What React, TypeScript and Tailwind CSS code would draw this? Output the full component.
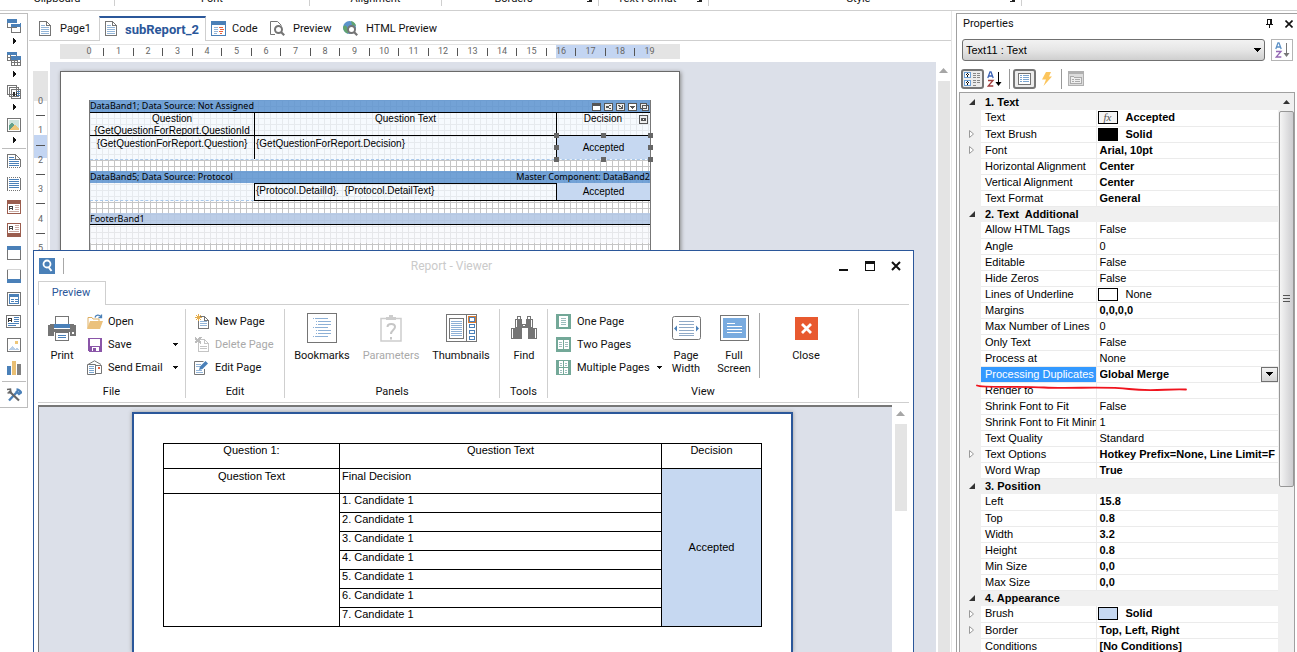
import type { ReactNode } from "react";

type IconProps = { w: number; h: number; children: ReactNode; smooth?: boolean };

function Icon({ w, h, children, smooth }: IconProps) {
  return (
    <svg
      width={w}
      height={h}
      viewBox={`0 0 ${w} ${h}`}
      fill="none"
      shapeRendering={smooth ? "auto" : "crispEdges"}
      className="shrink-0"
      aria-hidden="true"
    >
      {children}
    </svg>
  );
}

const BLUE = "#4a80b8";
const GRAY = "#757575";
const GREEN = "#73a898";

/* ---------- shared icons ---------- */

function PageIcon() {
  return (
    <Icon w={12} h={15}>
      <path d="M.5.5h7l4 4v10H.5z" fill="#fff" stroke={GRAY} />
      <path d="M7.5.5v4h4" stroke={GRAY} />
      <path d="M2 4.5h4M2 6.5h8M2 8.5h8M2 10.5h8M2 12.5h8" stroke="#93b5d8" />
    </Icon>
  );
}

function CodeIcon() {
  return (
    <Icon w={15} h={15}>
      <path d="M.5.5h14v14H.5z" fill="#fff" stroke={BLUE} />
      <path d="M0 0h15v4H0z" fill={BLUE} />
      <path d="M3 6.5h4M3 8.5h4M3 10.5h4M3 12.5h3" stroke="#93b5d8" />
      <path d="M8 6.5h4M9 8.5h4M8 10.5h4M9 12.5h2" stroke="#e8623c" />
    </Icon>
  );
}

function PreviewIcon() {
  return (
    <Icon w={15} h={15} smooth>
      <path d="M5 13.5H.5V.5h7l4 4" stroke={GRAY} />
      <circle cx="8.5" cy="8.5" r="3.5" fill="#fff" stroke={GRAY} strokeWidth="2" />
      <path d="M11 11l3.2 3.2" stroke={GRAY} strokeWidth="2.2" />
    </Icon>
  );
}

function HtmlIcon() {
  return (
    <Icon w={15} h={15} smooth>
      <circle cx="6.5" cy="6.5" r="6.5" fill="#5b93cc" />
      <path d="M0 6c2-3 4-1 4 1s2 2 1 5.500C2 12 0 9 0 6zM8 0c3 .5 5 3 5 5L9 4z" fill="#61a46f" />
      <circle cx="8.500" cy="8.500" r="3.500" fill="#fff" stroke={GRAY} strokeWidth="2" />
      <path d="M11 11l3.200 3.200" stroke={GRAY} strokeWidth="2.200" />
    </Icon>
  );
}

function ArrowRight() {
  return (
    <Icon w={4} h={6}>
      <path d="M0 0h1v6H0zM1 1h1v4H1zM2 2h1v2H2z" fill="#111" />
    </Icon>
  );
}

function ArrowDown() {
  return (
    <Icon w={5} h={3}>
      <path d="M0 0h5v1H0zM1 1h3v1H1zM2 2h1v1H2z" fill="#111" />
    </Icon>
  );
}

function ScrollUp() {
  return (
    <Icon w={9} h={5} smooth>
      <path d="M0 5l4.500-5L9 5z" fill="#a6a6a6" />
    </Icon>
  );
}

function Launcher() {
  return (
    <Icon w={7} h={6}>
      <path d="M0 0h1v2H0zM3 3l3 2M6 1v4H2" stroke="#222" />
    </Icon>
  );
}

/* ---------- top strip ---------- */

const ribbonGroups = [
  { label: "Clipboard", width: "w-[115px]", launcher: false },
  { label: "Font", width: "w-[195px]", launcher: false },
  { label: "Alignment", width: "w-[132px]", launcher: false },
  { label: "Borders", width: "w-[157px]", launcher: true },
  { label: "Text Format", width: "w-[110px]", launcher: true },
  { label: "Style", width: "w-[313px]", launcher: true },
];

function RibbonStrip() {
  return (
    <header className="flex h-[11px] shrink-0 overflow-hidden border-b border-[#cfcfcf]">
      {ribbonGroups.map((g) => (
        <div
          key={g.label}
          className={`-mt-[7px] flex h-[13px] shrink-0 items-start border-r border-[#cfcfcf] leading-3 ${g.width}`}
        >
          <span className="flex-1 text-center">{g.label}</span>
          {g.launcher && (
            <button aria-label={`${g.label} settings`} className="mt-[3px] mr-1.5">
              <Launcher />
            </button>
          )}
        </div>
      ))}
    </header>
  );
}

/* ---------- left toolbar ---------- */

const menuTools = [
  {
    name: "Bands",
    icon: (
      <Icon w={14} h={14}>
        <path d="M.5.5h9v8h-9zM4.500 5.500h9v8h-9z" fill="#fff" stroke={GRAY} />
        <path d="M0 0h10v4H0zM4 4h10v4H4z" fill={BLUE} />
        <path d="M4 4.500h9" stroke="#fff" />
      </Icon>
    ),
  },
  {
    name: "Cross bands",
    icon: (
      <Icon w={14} h={14}>
        <path d="M.5.5h9v8h-9zM4.500 5.500h9v8h-9z" fill="#fff" stroke={GRAY} />
        <path d="M0 0h10v3H0zM4 4h10v4H4z" fill={BLUE} />
        <path d="M0 5.500h4M3.500 3v5M4 10.500h10M7.500 8v6M10.500 8v6" stroke={GRAY} />
      </Icon>
    ),
  },
  {
    name: "Components",
    icon: (
      <Icon w={14} h={14}>
        <path d="M.5.5h9v9h-9zM2.500 2.500h9v9h-9zM4.500 4.500h9v9h-9z" fill="#fff" stroke={GRAY} />
        <path d="M6.500 11V7h1v4M9.500 7v4" stroke="#333" />
        <path d="M10 6.500h3M10 8.500h3M10 10.500h3" stroke={BLUE} />
      </Icon>
    ),
  },
  {
    name: "Pictures",
    icon: (
      <Icon w={14} h={14}>
        <path d="M.5.5h13v13H.5z" fill="#fff" stroke={GRAY} />
        <path d="M2 2h10v10H2z" fill="#cfe3dc" />
        <path d="M2 8l3-4 3 4v4H2z" fill="#61a089" />
        <path d="M2 12l6-5 4 4v1z" fill="#eec679" />
      </Icon>
    ),
  },
];

const tools = [
  {
    name: "Report title",
    icon: (
      <Icon w={14} h={14}>
        <path d="M.5 13V.5h8l5 5V13" fill="#fff" stroke={GRAY} />
        <path d="M8.500 0v5H14" stroke={GRAY} />
        <path d="M2 3.500h5M2 5.500h6M2 7.500h10M2 9.500h10M2 11.500h10" stroke={BLUE} />
        <path d="M0 13.500h14" stroke={GRAY} strokeDasharray="1 1" />
      </Icon>
    ),
  },
  {
    name: "Page header",
    icon: (
      <Icon w={14} h={14}>
        <path d="M.5 1v12M13.500 1v12" stroke={GRAY} />
        <path d="M0 .5h14M0 13.500h14" stroke={GRAY} strokeDasharray="1 1" />
        <path d="M2 2.500h10M2 4.500h10M2 6.500h10M2 8.500h10M2 10.500h10" stroke={BLUE} />
      </Icon>
    ),
  },
  {
    name: "Header",
    icon: (
      <Icon w={14} h={14}>
        <path d="M.5.5h13v13H.5z" fill="#fff" stroke="#9b5d4e" />
        <path d="M0 0h14v4H0z" fill="#9b5d4e" />
        <path d="M2.500 10V6h3v4M2 8.500h4" stroke="#444" />
        <path d="M8 5.500h4M8 7.500h4M8 9.500h4M2 11.500h10" stroke="#c9aaa2" />
      </Icon>
    ),
  },
  {
    name: "Footer",
    icon: (
      <Icon w={14} h={14}>
        <path d="M.5.5h13v13H.5z" fill="#fff" stroke="#9b5d4e" />
        <path d="M0 10h14v4H0z" fill="#9b5d4e" />
        <path d="M2.500 7V3h3v4M2 5.500h4" stroke="#444" />
        <path d="M8 2.500h4M8 4.500h4M8 6.500h4M2 8.500h10" stroke="#c9aaa2" />
      </Icon>
    ),
  },
  {
    name: "Group header",
    icon: (
      <Icon w={14} h={14}>
        <path d="M.5.5h13v13H.5z" fill="#fff" stroke={GRAY} />
        <path d="M0 0h14v4H0z" fill={BLUE} />
      </Icon>
    ),
  },
  {
    name: "Group footer",
    icon: (
      <Icon w={14} h={14}>
        <path d="M.5 1v12M13.500 1v12" stroke={GRAY} />
        <path d="M0 .5h14" stroke="#d5d5d5" />
        <path d="M0 10h14v4H0z" fill={BLUE} />
      </Icon>
    ),
  },
  {
    name: "Data",
    icon: (
      <Icon w={14} h={14}>
        <path d="M.5.5h13v13H.5z" fill="#fff" stroke={GRAY} />
        <path d="M2 2h10v3H2z" fill={BLUE} />
        <path d="M2.500 5v6.500h9V5M4 7.500h3M8 7.500h3M4 9.500h3M8 9.500h3" stroke={BLUE} />
      </Icon>
    ),
  },
  {
    name: "Text",
    icon: (
      <Icon w={15} h={13}>
        <path d="M.5.5h14v12H.5z" fill="#fff" stroke={GRAY} />
        <path d="M2.500 7V3h3v4M2 5.500h4" stroke="#333" />
        <path d="M8 2.500h5M8 4.500h5M8 6.500h5M2 8.500h11M2 10.500h8" stroke={BLUE} />
      </Icon>
    ),
  },
  {
    name: "Image",
    icon: (
      <Icon w={14} h={14}>
        <path d="M.5.5h13v13H.5z" fill="#fff" stroke={GRAY} />
        <path d="M2 12l3-4 3 3 2-2 2 3z" fill="#b9cfe8" />
        <path d="M8 3h3v3H8z" fill="#eec679" />
      </Icon>
    ),
  },
  {
    name: "Chart",
    icon: (
      <Icon w={14} h={14}>
        <path d="M0 5h4v9H0z" fill={BLUE} />
        <path d="M5 0h4v14H5z" fill="#e9bf74" />
        <path d="M10 3h4v11h-4z" fill="#808080" />
      </Icon>
    ),
  },
];

function LeftToolbar() {
  return (
    <nav
      aria-label="Components"
      className="mt-0.5 flex w-7 shrink-0 flex-col items-center self-start border border-l-0 border-[#bdbdbd] pt-0.5"
    >
      {menuTools.map((t) => (
        <button key={t.name} aria-label={t.name} className="flex flex-col items-center">
          <span className="flex h-5 items-center">{t.icon}</span>
          <span className="flex h-[13px] items-center pb-[3px] pl-[3px]">
            <ArrowRight />
          </span>
        </button>
      ))}
      <span className="h-px w-6 bg-[#bdbdbd]" />
      {tools.map((t) => (
        <button key={t.name} aria-label={t.name} className="flex h-[23px] items-center">
          {t.icon}
        </button>
      ))}
      <span className="mt-0.5 h-px w-6 bg-[#bdbdbd]" />
      <button aria-label="Setup toolbox" className="flex h-[25px] items-center">
        <Icon w={16} h={14} smooth>
          <path d="M3 12.500L11 4M10.500 1.500c1.500 0 3 .5 4.500 3l-2 1.500-3-3" stroke={BLUE} strokeWidth="2.400" />
          <path d="M3 3l10 9.500" stroke="#666" strokeWidth="2.200" />
          <path d="M1 1.500L4.500 1 5 4.500 1.500 5" stroke="#666" strokeWidth="1.500" />
        </Icon>
      </button>
    </nav>
  );
}

/* ---------- designer ---------- */

function DesignerTabs() {
  return (
    <div role="tablist" className="flex h-7 items-stretch border-b border-[#cfcfcf] pt-[3px] pl-2.5">
      <button role="tab" className="flex w-[60px] items-center gap-[9px]">
        <PageIcon />
        <span className="pt-0.5">Page1</span>
      </button>
      <button
        role="tab"
        aria-selected="true"
        className="-mb-px flex w-[107px] items-center gap-2 border-x border-t-2 border-x-[#cfcfcf] border-t-[#2b579a] bg-white pb-0.5 pl-[5px] text-[13px] font-bold text-[#2b579a]"
      >
        <PageIcon />
        <span className="pt-0.5">subReport_2</span>
      </button>
      <button role="tab" className="flex w-16 items-center gap-1.5 pl-[5px]">
        <CodeIcon />
        <span className="pt-0.5">Code</span>
      </button>
      <button role="tab" className="flex w-[73px] items-center gap-2">
        <PreviewIcon />
        <span className="pt-0.5">Preview</span>
      </button>
      <button role="tab" className="flex items-center gap-2">
        <HtmlIcon />
        <span className="pt-0.5">HTML Preview</span>
      </button>
    </div>
  );
}

// 0, tick, 1, tick, 2 ...
function rulerMarks(last: number) {
  const marks: (number | null)[] = [];
  for (let i = 0; i <= last; i++) {
    marks.push(i);
    marks.push(null);
  }
  return marks;
}

function HorizontalRuler() {
  return (
    <div className="mt-[3px] ml-[31px] grid h-[15px] w-[620px] text-[9px] text-[#666]">
      <div className="col-start-1 row-start-1 flex">
        <span className="w-[30px] bg-[#e4e4e4]" />
        <span className="flex-1 border-y border-[#e4e4e4] bg-white" />
        <span className="w-[94px] border-y border-[#e4e4e4] bg-[#c3d5f2]" />
        <span className="w-[30px] bg-[#e4e4e4]" />
      </div>
      <div className="col-start-1 row-start-1 ml-[23px] flex w-[573px] items-center justify-between">
        {rulerMarks(19)
          .slice(0, 39)
          .map((m, i) => (
            <span key={i} className="flex w-3 justify-center">
              {m === null ? <i className="h-2 w-px bg-[#555]" /> : m}
            </span>
          ))}
      </div>
    </div>
  );
}

function VerticalRuler() {
  return (
    <div className="mt-[9px] mr-0.5 ml-1 grid w-[15px] shrink-0 text-[9px] text-[#666]">
      <div className="col-start-1 row-start-1 flex flex-col">
        <span className="h-[30px] bg-[#e4e4e4]" />
        <span className="h-[34px] border-x border-[#e4e4e4]" />
        <span className="h-[23px] border-x border-[#e4e4e4] bg-[#c3d5f2]" />
        <span className="flex-1 border-x border-[#e4e4e4]" />
      </div>
      <div className="col-start-1 row-start-1 mt-6 flex h-[159px] flex-col items-center justify-between">
        {rulerMarks(5)
          .slice(0, 11)
          .map((m, i) => (
            <span key={i} className="flex h-3 items-center leading-3">
              {m === null ? <i className="h-px w-[9px] bg-[#555]" /> : m}
            </span>
          ))}
      </div>
    </div>
  );
}

function BandButtons() {
  return (
    <span className="flex gap-[3px] pt-[3px] pr-px">
      <Icon w={9} h={8}>
        <path d="M.5.5h8v7h-8z" fill="#fff" stroke="#555" />
        <path d="M0 0h9v3H0z" fill="#555" />
      </Icon>
      <Icon w={9} h={8}>
        <path d="M.5.5h8v7h-8z" fill="#eee" stroke="#555" />
        <path d="M2 3h2v2H2zM5 2h2v1H5zM5 5h2v1H5zM4 3h1v2H4z" fill="#555" />
      </Icon>
      <Icon w={9} h={8}>
        <path d="M.5.5h8v7h-8z" fill="#eee" stroke="#555" />
        <path d="M2 2h2v1H2zM3 3h2v1H3zM6 2h1v4H3V5h2V4h1z" fill="#555" />
      </Icon>
      <Icon w={9} h={8}>
        <path d="M.5.5h8v7h-8z" fill="#fff" stroke="#555" />
        <path d="M2 3h5v1H2zM3 4h3v1H3zM4 5h1v1H4z" fill="#555" />
      </Icon>
      <Icon w={9} h={8}>
        <path d="M.5.5h6v5h-6zM2.500 2.500h6v5h-6z" fill="#eee" stroke="#555" />
      </Icon>
    </span>
  );
}

const handles = [
  "-top-[3px] -left-[3px]",
  "-top-[3px] left-1/2 -ml-[3px]",
  "-top-[3px] -right-[3px]",
  "top-1/2 -mt-[3px] -left-[3px]",
  "top-1/2 -mt-[3px] -right-[3px]",
  "-bottom-[3px] -left-[3px]",
  "-bottom-[3px] left-1/2 -ml-[3px]",
  "-bottom-[3px] -right-[3px]",
];

const bandCols = "grid grid-cols-[164px_303px_1fr]";

function ReportPage() {
  return (
    <div className="mt-[9px] ml-2.5 h-full w-[620px] border border-[#6a6a6a] bg-white pt-7 pr-7 pl-7 shadow-[1px_1px_4px_#888]">
      <div className="h-full border-r border-l border-[#777] bg-[linear-gradient(to_right,#c6c6c6_1px,transparent_1px),linear-gradient(to_bottom,#c6c6c6_1px,transparent_1px)] bg-[size:6px_6px] text-[10px] leading-3 text-black">
        <div className="flex h-3 justify-between bg-[#6599d2e8] font-['Noto_Sans'] text-[9px]">
          <span>DataBand1; Data Source: Not Assigned</span>
          <BandButtons />
        </div>
        <div className="bg-[#f2f8feb8]">
          <div className={`h-6 border-y border-black ${bandCols}`}>
            <div className="text-center">
              Question
              <br />
              {"{GetQuestionForReport.QuestionId"}
            </div>
            <div className="border-x border-black text-center">Question Text</div>
            <div className="grid grid-cols-[1fr_11px] pl-2.5 text-center">
              Decision
              <span className="pt-0.5">
                <Icon w={9} h={9}>
                  <path d="M.5.5h8v8h-8z" fill="#eee" stroke="#555" />
                  <path d="M2 3h5v3H2z" fill="#555" />
                  <path d="M4 4h1v1H4z" fill="#fff" />
                </Icon>
              </span>
            </div>
          </div>
          <div className={`h-6 border-b border-dashed border-[#a9c8ea] ${bandCols}`}>
            <div className="pt-0.5 text-center">{"{GetQuestionForReport.Question}"}</div>
            <div className="border-x border-black pt-0.5 pl-px">
              {"{GetQuestionForReport.Decision}"}
            </div>
            <div className="relative flex items-center justify-center bg-[#c6d8f1]">
              Accepted
              {handles.map((h) => (
                <i key={h} className={`absolute size-[5px] bg-[#666] ${h}`} />
              ))}
            </div>
          </div>
        </div>
        <div className="mt-[11px] flex h-3 justify-between bg-[#6599d2e8] font-['Noto_Sans'] text-[9px]">
          <span>DataBand5; Data Source: Protocol</span>
          <span>Master Component: DataBand2</span>
        </div>
        <div className={`h-[18px] bg-[#f2f8feb8] ${bandCols}`}>
          <div className="border-b border-dashed border-[#a9c8ea]" />
          <div className="border border-black pt-px pl-px whitespace-pre">
            {"{Protocol.DetailId}.  {Protocol.DetailText}"}
          </div>
          <div className="flex items-center justify-center border-b border-black bg-[#c6d8f1]">
            Accepted
          </div>
        </div>
        <div className="mt-3 h-3 border-b border-black bg-[#b4c8e5e8] font-['Noto_Sans'] text-[9px] leading-3">
          FooterBand1
        </div>
        <div className="h-[18px] bg-[#f6f8fca8]" />
      </div>
    </div>
  );
}

/* ---------- viewer window ---------- */

function RibbonGroup({ label, width, children }: { label: string; width: string; children: ReactNode }) {
  return (
    <section aria-label={label} className={`my-1 flex shrink-0 flex-col border-r border-[#cfcfcf] ${width}`}>
      <div className="flex h-[77px]">{children}</div>
      <div className="text-center leading-3">{label}</div>
    </section>
  );
}

type BigProps = { icon: ReactNode; label: string; width: string; disabled?: boolean };

function BigButton({ icon, label, width, disabled }: BigProps) {
  return (
    <button
      disabled={disabled}
      className={`flex shrink-0 flex-col items-center leading-[13px] disabled:text-[#a9a9a9] ${width}`}
    >
      <span className="flex h-10 shrink-0 items-center pb-0.5">{icon}</span>
      {label}
    </button>
  );
}

type SmallProps = { icon: ReactNode; label: string; menu?: boolean; disabled?: boolean };

function SmallButton({ icon, label, menu, disabled }: SmallProps) {
  return (
    <button disabled={disabled} className="flex h-[23px] w-full items-center gap-1.5 disabled:text-[#a9a9a9]">
      <span className="flex w-[15px] justify-center">{icon}</span>
      <span className="flex-1 pt-0.5 text-left whitespace-nowrap">{label}</span>
      {menu && <ArrowDown />}
    </button>
  );
}

const printIcon = (
  <Icon w={28} h={25}>
    <path d="M7.500 9V.5h13V9" fill="#fff" stroke={GRAY} />
    <path d="M2 8h4v5h16V8h4v1h2v11h-6v-4H6v4H0V9h2z" fill={GRAY} />
    <path d="M6 8h16v4H6z" fill={BLUE} />
    <path d="M24 16h2v2h-2z" fill="#fff" />
    <path d="M7.500 16.500h13v8h-13z" fill="#fff" stroke={GRAY} />
    <path d="M10 19.500h8M10 21.500h8" stroke={BLUE} />
  </Icon>
);

const openIcon = (
  <Icon w={16} h={15} smooth>
    <path d="M1 14V3.500h4l1 1.500h6v3" stroke="#dcae62" />
    <path d="M3 7h13l-3 8H0z" fill="#ebc17c" />
    <path d="M8 3.500c1-3 4-3 6-1M14.500.5v3h-3" stroke={BLUE} strokeWidth="1.300" />
  </Icon>
);

const saveIcon = (
  <Icon w={14} h={14}>
    <path d="M0 0h14v14H1l-1-1z" fill="#8a55a8" />
    <path d="M2 1h10v7H2zM4 9h7v4H4z" fill="#fff" />
    <path d="M5 10h3v3H5z" fill="#8a55a8" />
  </Icon>
);

const emailIcon = (
  <Icon w={16} h={15} smooth>
    <path d="M1 4.500L7.500.8 14 4.500M8 5.500h6.500v8H9" stroke={GRAY} />
    <path d="M.5 4.500h8v10h-8z" fill="#fff" stroke={GRAY} />
    <path d="M2 6.500h5M2 8.500h5M2 10.500h5M2 12.500h5" stroke="#7ba5d0" />
    <path d="M11 7h2v2h-2z" fill="#e8623c" />
  </Icon>
);

const newPageIcon = (
  <Icon w={14} h={15}>
    <path d="M3.500 2.500h6l4 4v8h-10z" fill="#fff" stroke={GRAY} />
    <path d="M9.500 2.500v4h4" stroke={GRAY} />
    <path d="M5 7.500h7M5 9.500h7M5 11.500h7" stroke="#93b5d8" />
    <path d="M0 3h7v1H0zM3 0h1v7H3zM1 1h1v1H1zM5 1h1v1H5zM1 5h1v1H1zM5 5h1v1H5zM2 2h3v3H2z" fill="#e5ad4c" />
  </Icon>
);

const deletePageIcon = (
  <Icon w={14} h={15}>
    <path d="M3.500 2.500h6l4 4v8h-10z" fill="#fff" stroke="#c4c4c4" />
    <path d="M9.500 2.500v4h4M5 9.500h7M5 11.500h7" stroke="#c4c4c4" />
    <path d="M0 1l6 5M6 0L0 6" stroke="#bcbcbc" strokeWidth="2" />
  </Icon>
);

const editPageIcon = (
  <Icon w={15} h={15} smooth>
    <path d="M9.500 1.500H.5v13h10V9" stroke={GRAY} />
    <path d="M2 4.500h5M2 6.500h4M2 10.500h6M2 12.500h7" stroke="#93b5d8" />
    <path d="M5 10l1-3.500L11.500 1 14 3.500 8.500 9z" fill={BLUE} />
  </Icon>
);

const bookmarksIcon = (
  <Icon w={30} h={30}>
    <path d="M.5.5h29v29H.5z" fill="#fff" stroke={GRAY} />
    <path
      d="M6 5.500h1M8 5.500h13M9 8.500h1M11 8.500h13M9 11.500h1M11 11.500h13M6 14.500h1M8 14.500h13M9 17.500h1M11 17.500h13M9 20.500h1M11 20.500h13M6 23.500h1M8 23.500h13"
      stroke="#8db0d6"
    />
  </Icon>
);

const parametersIcon = (
  <Icon w={22} h={28} smooth>
    <path d="M1 4.500h20v22.500H1z" fill="#fff" stroke="#cdcdcd" strokeWidth="1.500" />
    <path d="M6 6V3h3V1h4v2h3v3z" fill="#cdcdcd" />
    <path d="M7.500 13c0-4 7.500-4 7.500 0 0 3-4 3-4 7M11 23v2.500" stroke="#c6c6c6" strokeWidth="2" />
  </Icon>
);

const thumbnailsIcon = (
  <Icon w={31} h={28}>
    <path d="M.5.5h30v27H.5z" fill="#fff" stroke={GRAY} />
    <path d="M20.500 0v28M3.500 4.500h14v20h-14z" stroke={GRAY} />
    <path d="M5 7.500h11M5 9.500h11M5 11.500h11M5 13.500h11M5 15.500h11M5 17.500h11M5 19.500h11M5 21.500h11" stroke="#8db0d6" />
    <path d="M23.500 10.500h5v3h-5zM23.500 16.500h5v3h-5zM23.500 22.500h5v3h-5z" stroke={BLUE} />
    <path d="M22 2h8v7h-8z" fill="#e07b2c" />
    <path d="M23 3h6v5h-6z" fill={BLUE} />
    <path d="M24 4h4v3h-4z" fill="#fff" />
  </Icon>
);

const findIcon = (
  <Icon w={26} h={24}>
    <path d="M6 0h4v3h1v5h4V3h1V0h4v3h2v9h4v11h-9V12h-6v11H0V12h4V3h2z" fill={GRAY} />
    <path d="M7 1h2v2H7zM17 1h2v2h-2zM5 4h1v7H5zM20 4h1v7h-1zM1 13h1v9H1zM24 13h1v9h-1z" fill="#fff" />
    <path d="M11 8h4v4h-4z" fill={GRAY} />
    <path d="M12 9h2v1h-2z" fill="#fff" />
  </Icon>
);

const onePageIcon = (
  <Icon w={15} h={15}>
    <rect width="15" height="15" rx="1" fill={GREEN} />
    <path d="M3 2h9v11H3z" fill="#fff" />
    <path d="M5 4.500h5M5 6.500h5M5 8.500h5M5 10.500h5" stroke="#9dbdbd" />
  </Icon>
);

const twoPagesIcon = (
  <Icon w={15} h={15}>
    <rect width="15" height="15" rx="1" fill={GREEN} />
    <path d="M2 3h5v9H2zM8 3h5v9H8z" fill="#fff" />
    <path d="M3 5.500h3M3 7.500h3M3 9.500h3M9 5.500h3M9 7.500h3M9 9.500h3" stroke="#9dbdbd" />
  </Icon>
);

const multiplePagesIcon = (
  <Icon w={15} h={15}>
    <rect width="15" height="15" rx="1" fill={GREEN} />
    <path d="M3 1h4v6H3zM8 1h4v6H8zM3 8h4v6H3zM8 8h4v6H8z" fill="#fff" />
    <path d="M4 3.500h2M4 5.500h2M9 3.500h2M9 5.500h2M4 10.500h2M4 12.500h2M9 10.500h2M9 12.500h2" stroke="#9dbdbd" />
  </Icon>
);

const pageWidthIcon = (
  <Icon w={29} h={24} smooth>
    <rect x=".5" y=".5" width="28" height="23" rx="2" fill="#fff" stroke={GRAY} />
    <path d="M7 5.500h15M7 8.500h15M7 11.500h15M7 14.500h15M7 17.500h15M7 19.500h15" stroke="#8fa9c6" />
    <path d="M5 9.500v6l-3-3zM24 9.500v6l3-3z" fill={BLUE} />
  </Icon>
);

const fullScreenIcon = (
  <Icon w={29} h={26}>
    <path d="M.5.5h28v25H.5z" fill="#fff" stroke={GRAY} />
    <path d="M3 3h23v20H3z" fill="#79abdf" />
    <path d="M7 8.500h8M7 11.500h15M7 14.500h15M7 17.500h15" stroke="#fff" />
  </Icon>
);

const closeIcon = (
  <Icon w={23} h={23} smooth>
    <path d="M0 0h23v23H0z" fill="#e8592f" />
    <path d="M7 7l9 9M16 7l-9 9" stroke="#fff" strokeWidth="2.800" />
  </Icon>
);

function ViewerRibbon() {
  return (
    <div className="mx-1 flex h-[98px] shrink-0 border-b border-[#cfcfcf]">
      <RibbonGroup label="File" width="w-[148px]">
        <BigButton icon={printIcon} label="Print" width="w-12" />
        <div className="flex flex-1 flex-col pt-px pr-[7px] pl-px">
          <SmallButton icon={openIcon} label="Open" />
          <SmallButton icon={saveIcon} label="Save" menu />
          <SmallButton icon={emailIcon} label="Send Email" menu />
        </div>
      </RibbonGroup>
      <RibbonGroup label="Edit" width="w-[99px]">
        <div className="flex flex-col pt-px pl-2">
          <SmallButton icon={newPageIcon} label="New Page" />
          <SmallButton icon={deletePageIcon} label="Delete Page" disabled />
          <SmallButton icon={editPageIcon} label="Edit Page" />
        </div>
      </RibbonGroup>
      <RibbonGroup label="Panels" width="w-[215px]">
        <BigButton icon={bookmarksIcon} label="Bookmarks" width="w-[74px]" />
        <BigButton icon={parametersIcon} label="Parameters" width="w-16" disabled />
        <BigButton icon={thumbnailsIcon} label="Thumbnails" width="w-[76px]" />
      </RibbonGroup>
      <RibbonGroup label="Tools" width="w-12">
        <BigButton icon={findIcon} label="Find" width="w-12" />
      </RibbonGroup>
      <RibbonGroup label="View" width="w-[311px]">
        <div className="flex w-[114px] flex-col pt-px pl-2">
          <SmallButton icon={onePageIcon} label="One Page" />
          <SmallButton icon={twoPagesIcon} label="Two Pages" />
          <SmallButton icon={multiplePagesIcon} label="Multiple Pages" menu />
        </div>
        <div className="mt-1 mb-2 flex border-r border-[#a8a8a8] pr-px">
          <div className="-mt-1 flex">
            <BigButton icon={pageWidthIcon} label="Page Width" width="w-12" />
            <BigButton icon={fullScreenIcon} label="Full Screen" width="w-12" />
          </div>
        </div>
        <BigButton icon={closeIcon} label="Close" width="w-[92px]" />
      </RibbonGroup>
    </div>
  );
}

const candidates = [1, 2, 3, 4, 5, 6, 7];

function PreviewTable() {
  return (
    <table className="w-full table-fixed border-collapse text-[11px] leading-[13px] text-black [&_td]:border [&_td]:border-black [&_td]:px-0.5 [&_th]:border [&_th]:border-black">
      <colgroup>
        <col className="w-[176px]" />
        <col />
        <col className="w-[100px]" />
      </colgroup>
      <thead>
        <tr className="h-[25px] align-top">
          <th className="font-normal">Question 1:</th>
          <th className="font-normal">Question Text</th>
          <th className="font-normal">Decision</th>
        </tr>
      </thead>
      <tbody>
        <tr className="h-[25px] align-top">
          <td className="pt-px text-center">Question Text</td>
          <td className="pt-px">Final Decision</td>
          <td rowSpan={8} className="bg-[#c6d8f1] text-center align-middle">
            Accepted
          </td>
        </tr>
        {candidates.map((n) => (
          <tr key={n} className="h-[19px] align-top">
            {n === 1 && <td rowSpan={7} />}
            <td>{n}. Candidate 1</td>
          </tr>
        ))}
      </tbody>
    </table>
  );
}

function ViewerWindow() {
  return (
    <div
      role="dialog"
      aria-label="Report - Viewer"
      className="absolute top-[239px] right-[37px] bottom-0 left-1 flex flex-col overflow-hidden border border-b-0 border-[#2b579a] bg-white"
    >
      <div className="flex h-[30px] shrink-0 items-center pr-3 pl-[5px]">
        <Icon w={16} h={16} smooth>
          <path d="M0 0h16v16H0z" fill={BLUE} />
          <circle cx="8" cy="6" r="3.500" stroke="#fff" strokeWidth="1.800" />
          <path d="M9.500 9l3 4" stroke="#fff" strokeWidth="2" />
        </Icon>
        <span className="ml-2 h-4 w-px bg-[#a8a8a8]" />
        <h1 className="flex-1 text-center text-xs text-[#cacaca]">Report - Viewer</h1>
        <div className="flex items-center gap-4">
          <button aria-label="Minimize">
            <Icon w={10} h={10}>
              <path d="M0 8h9v2H0z" fill="#111" />
            </Icon>
          </button>
          <button aria-label="Maximize">
            <Icon w={10} h={10}>
              <path d="M.5.5h9v9h-9z" stroke="#111" />
              <path d="M0 0h10v3H0z" fill="#111" />
            </Icon>
          </button>
          <button aria-label="Close window">
            <Icon w={10} h={10} smooth>
              <path d="M1 1l8 8M9 1L1 9" stroke="#111" strokeWidth="2" />
            </Icon>
          </button>
        </div>
      </div>
      <div role="tablist" className="mx-1 flex h-6 shrink-0 border-b border-[#cfcfcf]">
        <button
          role="tab"
          aria-selected="true"
          className="-mb-px w-[68px] border border-b-0 border-[#cfcfcf] bg-white pr-0.5 text-[#2b579a]"
        >
          Preview
        </button>
      </div>
      <ViewerRibbon />
      <div className="mt-[2px] flex flex-1 px-1">
        <div className="flex flex-1 justify-center border-t-2 border-l border-[#777] bg-[#dce0e9] pt-[5px] pr-1.5">
          <div className="w-[661px] border-2 border-b-0 border-[#2b579a] bg-white px-[29px] pt-[29px] shadow-[0_0_4px_#999]">
            <PreviewTable />
          </div>
        </div>
        <div className="flex w-[17px] flex-col items-center gap-1.5 pt-1.5">
          <ScrollUp />
          <span className="mt-0.5 h-[87px] w-3 bg-[#e4e4e4]" />
        </div>
      </div>
    </div>
  );
}

/* ---------- properties panel ---------- */

type Row = {
  name: string;
  value?: string;
  header?: boolean;
  plain?: boolean;
  expand?: boolean;
  swatch?: "fx" | "black" | "white" | "blue";
};

const rows: Row[] = [
  { name: "1. Text", header: true },
  { name: "Text", value: "Accepted", swatch: "fx" },
  { name: "Text Brush", value: "Solid", swatch: "black", expand: true },
  { name: "Font", value: "Arial, 10pt", expand: true },
  { name: "Horizontal Alignment", value: "Center" },
  { name: "Vertical Alignment", value: "Center" },
  { name: "Text Format", value: "General" },
  { name: "2. Text  Additional", header: true },
  { name: "Allow HTML Tags", value: "False", plain: true },
  { name: "Angle", value: "0", plain: true },
  { name: "Editable", value: "False", plain: true },
  { name: "Hide Zeros", value: "False", plain: true },
  { name: "Lines of Underline", value: "None", plain: true, swatch: "white" },
  { name: "Margins", value: "0,0,0,0" },
  { name: "Max Number of Lines", value: "0", plain: true },
  { name: "Only Text", value: "False", plain: true },
  { name: "Process at", value: "None", plain: true },
  { name: "Processing Duplicates", value: "Global Merge" },
  { name: "Render to" },
  { name: "Shrink Font to Fit", value: "False", plain: true },
  { name: "Shrink Font to Fit Minim", value: "1", plain: true },
  { name: "Text Quality", value: "Standard", plain: true },
  { name: "Text Options", value: "Hotkey Prefix=None, Line Limit=F", expand: true },
  { name: "Word Wrap", value: "True" },
  { name: "3. Position", header: true },
  { name: "Left", value: "15.8" },
  { name: "Top", value: "0.8" },
  { name: "Width", value: "3.2" },
  { name: "Height", value: "0.8" },
  { name: "Min Size", value: "0,0" },
  { name: "Max Size", value: "0,0" },
  { name: "4. Appearance", header: true },
  { name: "Brush", value: "Solid", swatch: "blue", expand: true },
  { name: "Border", value: "Top, Left, Right", expand: true },
  { name: "Conditions", value: "[No Conditions]" },
];

const swatchColors = {
  fx: "bg-[#f4f4f4]",
  black: "bg-black",
  white: "bg-white",
  blue: "bg-[#c6d8f1]",
};

function Expander({ open }: { open?: boolean }) {
  return (
    <Icon w={7} h={8} smooth>
      {open ? <path d="M7 1v6H1z" fill="#333" /> : <path d="M1.500.5v7l4-3.500z" fill="#fff" stroke="#999" />}
    </Icon>
  );
}

function PropertyValue({ row }: { row: Row }) {
  if (row.name === "Processing Duplicates") {
    return (
      <label className="relative flex h-[15px] items-center">
        <select aria-label={row.name} className="w-full appearance-none pl-[3px] font-bold">
          <option>{row.value}</option>
        </select>
        <span className="pointer-events-none absolute right-0 flex h-[15px] w-[17px] items-center justify-center border border-[#707070] bg-linear-to-b from-[#f4f4f4] to-[#d4d4d4]">
          <Icon w={7} h={4}>
            <path d="M0 0h7v1H0zM1 1h5v1H1zM2 2h3v1H2zM3 3h1v1H3z" fill="#000" />
          </Icon>
        </span>
      </label>
    );
  }
  return (
    <div className="flex h-[15px] items-center overflow-hidden pl-px whitespace-nowrap">
      {row.swatch && (
        <span
          className={`mr-1.5 flex h-[13px] w-5 shrink-0 items-center justify-center border border-black font-['Liberation_Serif'] font-normal text-[#555] italic ${swatchColors[row.swatch]}`}
        >
          {row.swatch === "fx" && "fx"}
        </span>
      )}
      <span className="pl-0.5">{row.value}</span>
    </div>
  );
}

function PropertyGrid() {
  return (
    <div className="mr-0.5 ml-0.5 flex min-h-0 flex-1 overflow-hidden border border-b-0 border-[#a0a0a0] bg-[#f0f0f0]">
      <div className="min-w-0 flex-1 overflow-hidden">
        <table className="mt-px w-full table-fixed border-collapse text-[11px] leading-[15px] text-black">
          <colgroup>
            <col className="w-[21px]" />
            <col className="w-[115px]" />
            <col />
          </colgroup>
          <tbody>
            {rows.map((row) =>
              row.header ? (
                <tr key={row.name} className="h-4">
                  <td className="pl-2">
                    <Expander open />
                  </td>
                  <th colSpan={2} scope="colgroup" className="pl-1 text-left font-bold whitespace-pre">
                    {row.name}
                  </th>
                </tr>
              ) : (
                <tr key={row.name} className="h-4">
                  <td className="pl-2">{row.expand && <Expander />}</td>
                  <th
                    scope="row"
                    className={`overflow-hidden border-r border-b border-[#ebebeb] pl-1 text-left font-normal whitespace-nowrap ${
                      row.name === "Processing Duplicates" ? "bg-[#3399ff] text-white" : "bg-white"
                    }`}
                  >
                    {row.name}
                  </th>
                  <td
                    className={`overflow-hidden border-b border-[#ebebeb] bg-white ${row.plain ? "" : "font-bold"}`}
                  >
                    <PropertyValue row={row} />
                  </td>
                </tr>
              )
            )}
          </tbody>
        </table>
      </div>
      <div className="flex w-4 shrink-0 flex-col items-center bg-[#f0f0f0]">
        <span className="flex h-[18px] items-center">
          <Icon w={7} h={4} smooth>
            <path d="M0 4l3.500-4L7 4z" fill="#333" />
          </Icon>
        </span>
        <span className="flex h-[376px] w-[15px] shrink-0 items-center justify-center rounded-xs border border-[#979797] bg-linear-to-r from-[#f5f5f5] to-[#cdcdd0]">
          <Icon w={7} h={8}>
            <path d="M0 .5h7M0 3.500h7M0 6.500h7" stroke="#555" />
          </Icon>
        </span>
      </div>
    </div>
  );
}

function SortIcon({ top, bottom, arrow }: { top: string; bottom: string; arrow: string }) {
  return (
    <Icon w={15} h={16} smooth>
      <path d="M.8 7L3 .8h1L6.200 7M1.800 5h3.500" stroke={top} strokeWidth="1.300" />
      <path d="M1 9.500h5L1.200 15H6.300" stroke={bottom} strokeWidth="1.300" />
      <path d="M11.500 1v11" stroke={arrow} />
      <path d="M8.500 11h6l-3 4z" fill={arrow} />
    </Icon>
  );
}

function PropertiesPanel() {
  return (
    <aside className="relative mt-0.5 ml-1 flex w-[341px] shrink-0 flex-col border-t border-l border-[#a0a0a0]">
      <div className="flex h-[18px] items-center pt-px pr-1 pl-1.5">
        <h2 className="flex-1 pt-0.5">Properties</h2>
        <button aria-label="Auto hide" className="mr-3">
          <Icon w={7} h={9}>
            <path d="M1.500 5V.5h4V5M0 5.500h7M3.500 6v3M4.500 1v4" stroke="#111" />
          </Icon>
        </button>
        <button aria-label="Close panel">
          <Icon w={8} h={8} smooth>
            <path d="M.5.5l7 7M7.500.5l-7 7" stroke="#111" strokeWidth="1.600" />
          </Icon>
        </button>
      </div>
      <div className="mt-[7px] flex h-[22px] shrink-0 gap-1.5 pr-1 pl-[5px]">
        <label className="relative flex flex-1 items-center">
          <select
            aria-label="Component"
            className="h-full w-full appearance-none rounded-[3px] border border-[#707070] bg-linear-to-b from-[#f2f2f2] via-[#e6e6e6] to-[#cfcfcf] pl-[3px] text-[11px] text-black"
          >
            <option>Text11 : Text</option>
          </select>
          <span className="pointer-events-none absolute right-1">
            <Icon w={7} h={4}>
              <path d="M0 0h7v1H0zM1 1h5v1H1zM2 2h3v1H2zM3 3h1v1H3z" fill="#000" />
            </Icon>
          </span>
        </label>
        <button
          aria-label="Sort components"
          className="flex w-[22px] items-center justify-center border border-[#b4b4b4]"
        >
          <SortIcon top="#5c90c6" bottom="#9468b4" arrow="#777" />
        </button>
      </div>
      <div className="mt-2 flex h-[23px] shrink-0 items-start pl-1">
        <button
          aria-label="Categorized"
          aria-pressed="true"
          className="flex h-5 w-[23px] items-center justify-center rounded-[3px] border-2 border-[#777] bg-[#ececec]"
        >
          <Icon w={17} h={16}>
            <path d="M.5 1.500h6v5h-6zM.5 9.500h6v5h-6z" fill="#fff" stroke="#6b9fd6" />
            <path d="M2 4h3v-1H2zM3 2h1v4H3zM2 12h3v-1H2zM3 10h1v4H3z" fill="#111" />
            <path d="M9 2.500h3M13 2.500h3M9 4.500h3M13 4.500h3M9 6.500h3M13 6.500h3M9 9.500h3M13 9.500h3M9 11.500h3M13 11.500h3M9 14.500h3" stroke="#888" />
          </Icon>
        </button>
        <button aria-label="Alphabetical" className="ml-[3px] pt-0.5">
          <SortIcon top="#3b62b5" bottom="#a03c3c" arrow="#000" />
        </button>
        <span className="ml-[7px] h-5 w-px bg-[#999]" />
        <button
          aria-label="Properties tab"
          aria-pressed="true"
          className="ml-[3px] flex h-5 w-[23px] items-center justify-center rounded-[3px] border-2 border-[#777] bg-[#ececec]"
        >
          <Icon w={13} h={12}>
            <path d="M.5.5h12v11H.5z" fill="#fff" stroke={GRAY} />
            <path d="M2 2.500h2M5 2.500h6M2 4.500h2M5 4.500h6M2 6.500h2M5 6.500h6M2 8.500h2M5 8.500h6" stroke="#7ba5d0" />
          </Icon>
        </button>
        <button aria-label="Events tab" className="ml-1.5 pt-[3px]">
          <Icon w={10} h={14} smooth>
            <path d="M4 0h5L7 4.500h3L1.500 14 4 7.500H0z" fill="#fcc55c" />
          </Icon>
        </button>
        <span className="ml-[9px] h-5 w-px bg-[#999]" />
        <button aria-label="Property pages" disabled className="ml-1.5 pt-0.5">
          <Icon w={16} h={15}>
            <path d="M.5.5h15v14H.5z" fill="#dcdcdc" stroke="#b0b0b0" />
            <path d="M0 0h16v3H0z" fill="#b0b0b0" />
            <path d="M2.500 5.500h3l1 1h7v6h-11z" fill="#eee" stroke="#aaa" />
            <path d="M4 8.500h2M7 8.500h5M4 10.500h2M7 10.500h5" stroke="#aaa" />
          </Icon>
        </button>
      </div>
      <PropertyGrid />
      {/* hand-drawn underline below Processing Duplicates */}
      <svg
        viewBox="0 0 212 8"
        className="pointer-events-none absolute top-[370px] left-[19px] h-2 w-[212px]"
        fill="none"
        stroke="#f0141e"
        strokeWidth="1.800"
        strokeLinecap="round"
        aria-hidden="true"
      >
        <path d="M1 1.500C6 4 40 2 68 3.500s60-1.500 85 1.500 38-.5 57 .5" />
      </svg>
    </aside>
  );
}

export default function App() {
  return (
    <div className="flex h-screen flex-col overflow-hidden bg-white font-['Roboto','Liberation_Sans',sans-serif] text-[11px] text-[#111]">
      <RibbonStrip />
      <div className="flex min-h-0 flex-1">
        <LeftToolbar />
        <main className="relative ml-px flex min-w-0 flex-1 flex-col border-r border-[#e6e6e6] pt-0.5">
          <DesignerTabs />
          <HorizontalRuler />
          <div className="mt-[3px] flex min-h-0 flex-1 overflow-hidden">
            <VerticalRuler />
            <div className="flex-1 overflow-hidden bg-[#dce0e9] font-['Liberation_Sans',sans-serif]">
              <ReportPage />
            </div>
            <div className="flex w-[15px] flex-col items-center gap-2 pt-1.5">
              <ScrollUp />
              <span className="w-3 flex-1 bg-[#e4e4e4]" />
            </div>
          </div>
          <div className="[&_table]:font-['Liberation_Sans',sans-serif]">
            <ViewerWindow />
          </div>
        </main>
        <div className="flex [&_select]:font-['Liberation_Sans',sans-serif] [&_table]:font-['Liberation_Sans',sans-serif]">
          <PropertiesPanel />
        </div>
      </div>
    </div>
  );
}
